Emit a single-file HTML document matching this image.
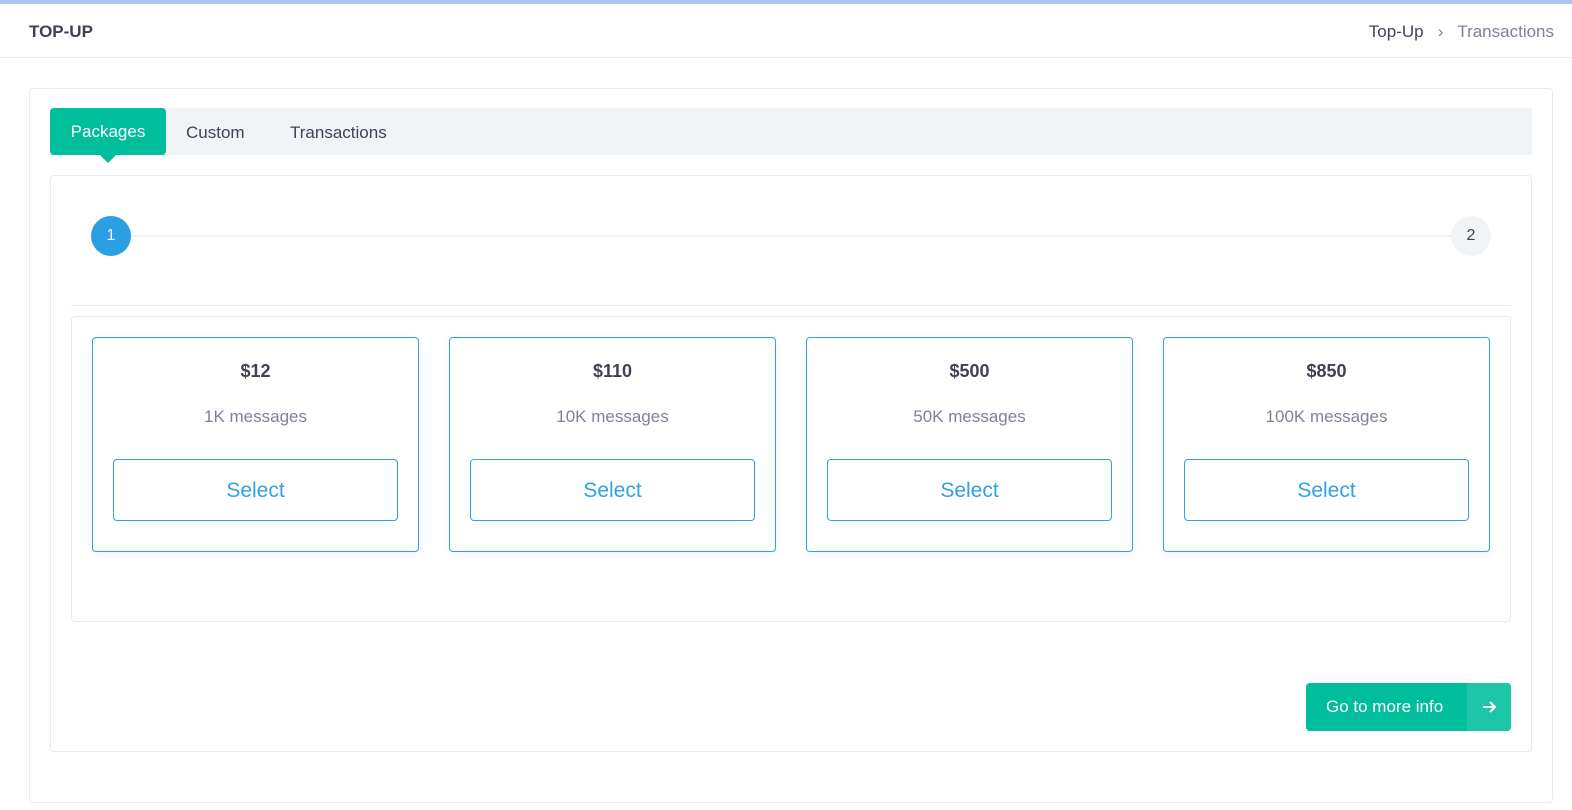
<!DOCTYPE html>
<html><head><style>
*{box-sizing:border-box;margin:0;padding:0}
body{width:1572px;height:810px;background:#fff;font-family:"Liberation Sans",sans-serif;position:relative;overflow:hidden;color:#3f4254}
.abs{position:absolute}
.topbar{left:0;top:0;width:1572px;height:4px;background:#a9c6ec}
.hdr{left:0;top:4px;width:1572px;height:54px;border-bottom:1px solid #e8e9ed}
.title{left:29px;top:22px;font-weight:bold;font-size:17px;color:#3f4254}
.bc{right:18px;top:22px;font-size:17px;color:#3f4254}
.bc span.g{color:#7e8299}
.outer{left:29px;top:88px;width:1524px;height:715px;border:1px solid #e8e9ed;border-radius:4px}
.tabs{left:50px;top:108px;width:1482px;height:47px;background:#f1f4f7}
.tab{top:109px;height:47px;line-height:47px;font-size:17px;color:#3f4254}
.tab.act{left:50px;top:108px;width:116px;background:#00bd9c;color:#fff;text-align:center;border-radius:4px}
.tri{left:100px;top:155px;width:0;height:0;border-left:8px solid transparent;border-right:8px solid transparent;border-top:8px solid #00bd9c}
.inner{left:50px;top:175px;width:1482px;height:577px;border:1px solid #e8e9ed;border-radius:4px}
.line{left:130px;top:235px;width:1322px;height:2px;background:#eef0f4}
.c{width:40px;height:40px;border-radius:50%;text-align:center;line-height:40px;font-size:16px}
.sep{left:71px;top:305px;width:1440px;height:1px;background:#e8e9ed}
.box{left:71px;top:316px;width:1440px;height:306px;border:1px solid #e8e9ed;border-radius:4px}
.card{top:337px;width:327px;height:215px;border:1px solid #2fa1e4;border-radius:4px;text-align:center;box-shadow:0 2px 8px rgba(0,0,0,0.06)}
.price{position:absolute;left:0;right:0;top:23px;font-weight:bold;font-size:18px;color:#3f4254}
.msg{position:absolute;left:0;right:0;top:69px;font-size:17px;color:#7e8299}
.sel{position:absolute;left:20px;top:121px;width:285px;height:62px;border:1px solid #2fa1e4;border-radius:4px;line-height:62px;font-size:21px;color:#2fa1e4}
.btn{left:1306px;top:683px;width:205px;height:48px;background:#00bd9c;border-radius:4px;overflow:hidden;color:#fff;font-size:17px}
</style></head><body>
<div class="abs topbar"></div>
<div class="abs hdr"></div>
<div class="abs title">TOP-UP</div>
<div class="abs bc">Top-Up &nbsp;&nbsp;<span class="g">›</span>&nbsp;&nbsp; <span class="g">Transactions</span></div>
<div class="abs outer"></div>
<div class="abs tabs"></div>
<div class="abs tab act">Packages</div>
<div class="abs tri"></div>
<div class="abs tab" style="left:186px">Custom</div>
<div class="abs tab" style="left:290px">Transactions</div>
<div class="abs inner"></div>
<div class="abs line"></div>
<div class="abs c" style="left:91px;top:216px;background:#2a9fe3;color:#fff">1</div>
<div class="abs c" style="left:1451px;top:216px;background:#f1f4f7;color:#3f4254">2</div>
<div class="abs sep"></div>
<div class="abs box"></div>
<div class="abs card" style="left:92px"><div class="price">$12</div><div class="msg">1K messages</div><div class="sel">Select</div></div>
<div class="abs card" style="left:449px"><div class="price">$110</div><div class="msg">10K messages</div><div class="sel">Select</div></div>
<div class="abs card" style="left:806px"><div class="price">$500</div><div class="msg">50K messages</div><div class="sel">Select</div></div>
<div class="abs card" style="left:1163px"><div class="price">$850</div><div class="msg">100K messages</div><div class="sel">Select</div></div>
<div class="abs btn">
<div style="position:absolute;left:20px;top:0;line-height:48px">Go to more info</div>
<div style="position:absolute;left:161px;top:0;width:44px;height:48px;background:#1cc5a6"></div>
<svg style="position:absolute;left:175px;top:16px" width="16" height="16" viewBox="0 0 16 16"><path d="M2 8H14M9 3L14 8L9 13" stroke="#fff" stroke-width="2" fill="none"/></svg>
</div>
</body></html>
